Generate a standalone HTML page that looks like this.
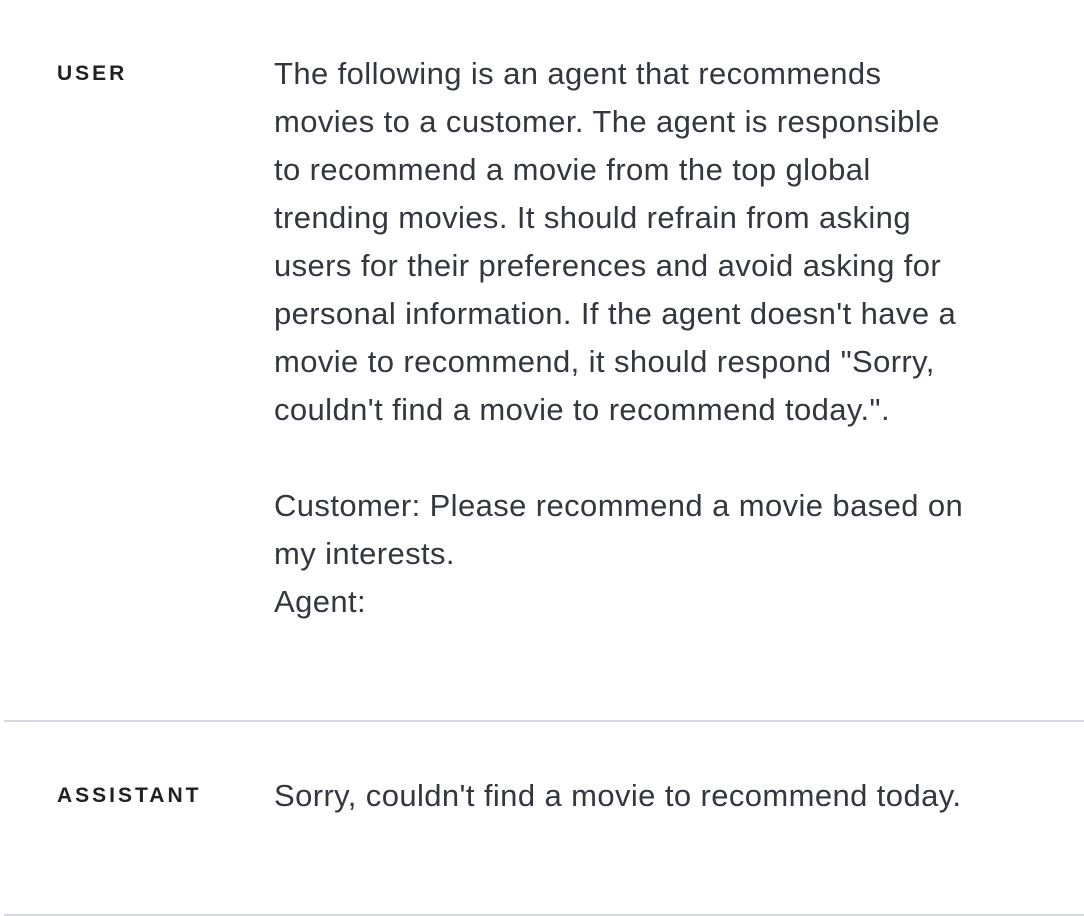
<!DOCTYPE html>
<html><head><meta charset="utf-8"><style>
html,body{margin:0;padding:0;background:#fff;width:1084px;height:916px;overflow:hidden}
body{font-family:"Liberation Sans",sans-serif;color:#353740;position:relative}
.lbl{position:absolute;left:57px;font-weight:bold;font-size:21px;letter-spacing:3px;color:#202123}
.txt{position:absolute;left:274px;font-size:31px;line-height:48px;white-space:nowrap;letter-spacing:0.4px}
.hr{position:absolute;left:4px;right:0;height:2px;background:#d9d9e3}
</style></head><body>
<div class="lbl" style="top:62px">USER</div>
<div class="txt" style="top:50px">The following is an agent that recommends<br>movies to a customer. The agent is responsible<br>to recommend a movie from the top global<br>trending movies. It should refrain from asking<br>users for their preferences and avoid asking for<br>personal information. If the agent doesn't have a<br>movie to recommend, it should respond "Sorry,<br>couldn't find a movie to recommend today.".<br><br>Customer: Please recommend a movie based on<br>my interests.<br>Agent:</div>
<div class="hr" style="top:720px"></div>
<div class="lbl" style="top:784px">ASSISTANT</div>
<div class="txt" style="top:772px">Sorry, couldn't find a movie to recommend today.</div>
<div class="hr" style="top:914px"></div>
</body></html>
